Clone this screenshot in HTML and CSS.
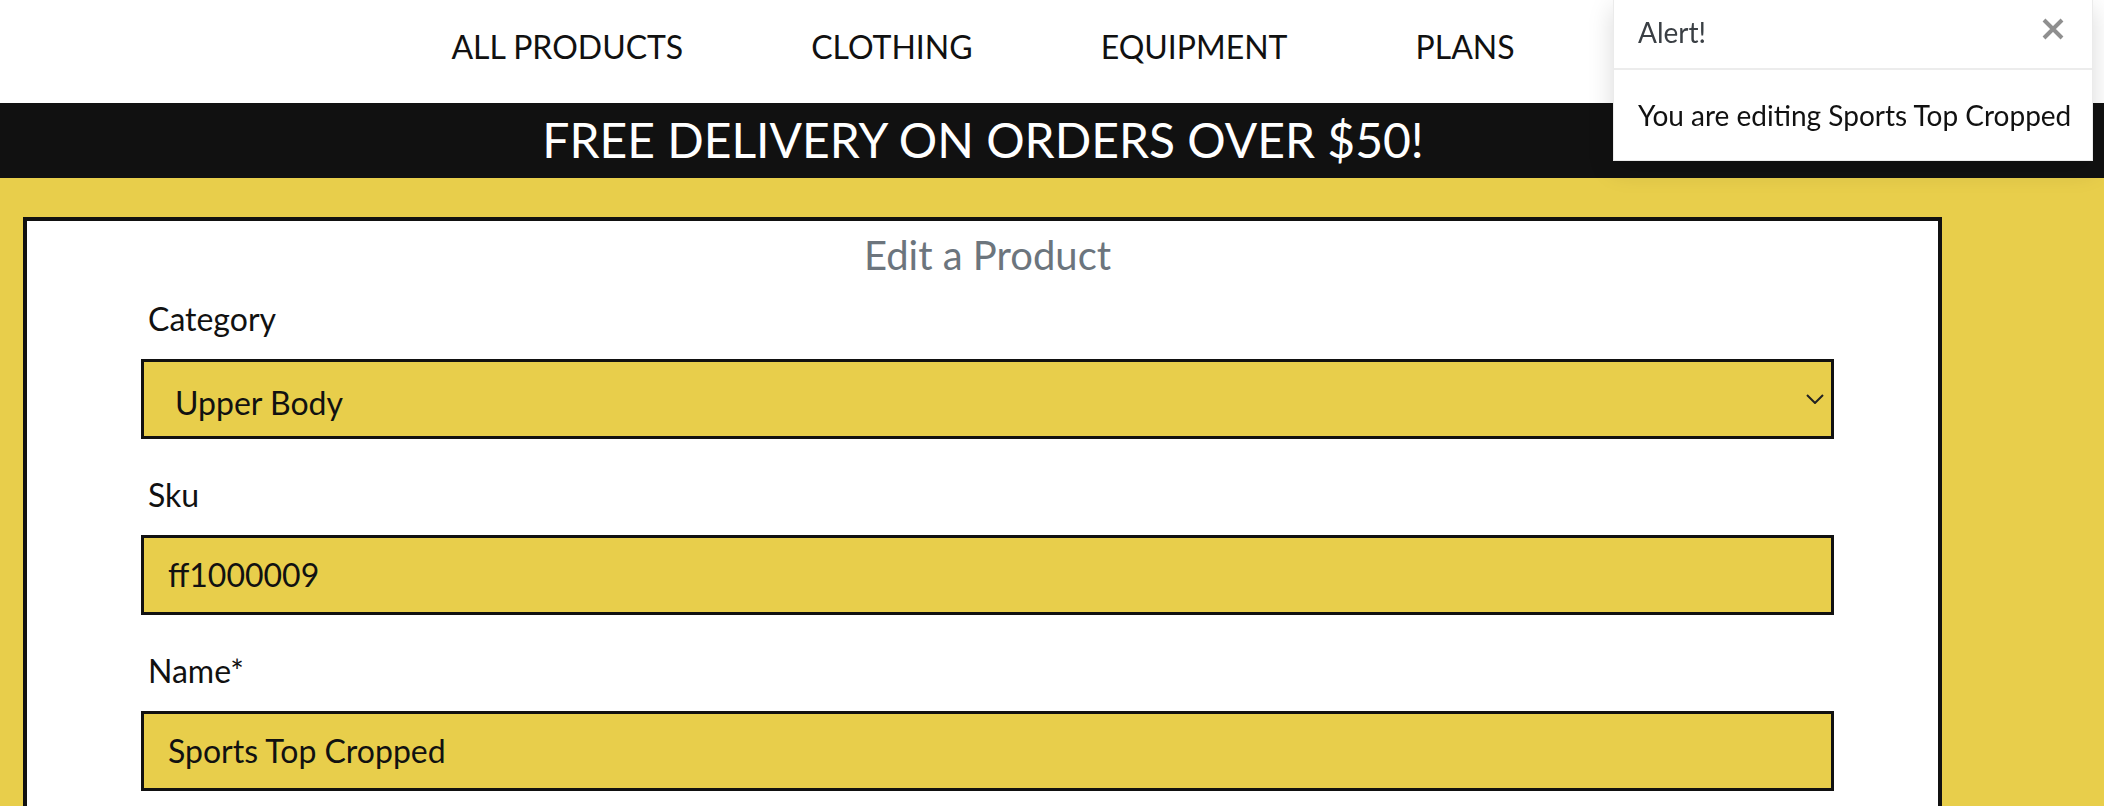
FILE: index.html
```html
<!DOCTYPE html>
<html lang="en">
<head>
<meta charset="utf-8">
<title>Edit a Product</title>
<link rel="stylesheet" href="styles.css">
</head>
<body>
<header class="topnav">
  <nav class="nav-links">
    <a class="nav-link" href="#">ALL PRODUCTS</a>
    <a class="nav-link" href="#">CLOTHING</a>
    <a class="nav-link" href="#">EQUIPMENT</a>
    <a class="nav-link" href="#">PLANS</a>
  </nav>
</header>
<div class="banner">
  <p class="banner-text">FREE DELIVERY ON ORDERS OVER $50!</p>
</div>
<main class="page">
  <section class="card">
    <h2 class="card-title">Edit a Product</h2>
    <form class="form">
      <div class="form-group">
        <label class="form-label">Category</label>
        <div class="select-box">
          <span class="select-value">Upper Body</span>
          <svg class="chevron" width="18" height="10" viewBox="0 0 18 10"><path d="M1 1 L9 9 L17 1" fill="none" stroke="#222" stroke-width="2"/></svg>
        </div>
      </div>
      <div class="form-group">
        <label class="form-label">Sku</label>
        <div class="text-input">ff1000009</div>
      </div>
      <div class="form-group">
        <label class="form-label">Name*</label>
        <div class="text-input">Sports Top Cropped</div>
      </div>
    </form>
  </section>
</main>
<div class="toast">
  <div class="toast-header">
    <span class="toast-title">Alert!</span>
    <svg class="toast-close" width="22" height="22" viewBox="0 0 22 22"><path d="M2 2 L20 20 M20 2 L2 20" stroke="#8f8f8f" stroke-width="4" fill="none"/></svg>
  </div>
  <div class="toast-body">You are editing Sports Top Cropped</div>
</div>
</body>
</html>
```
FILE: styles.css
```css
html {
  overflow: hidden;
}
body {
  margin: 0;
  background: #e8ce4b;
  font-family: Lato, "Open Sans", sans-serif;
  color: #111;
}
.topnav {
  box-sizing: border-box;
  height: 103px;
  background: #fff;
  padding: 28px 138px 0 0;
}
.nav-links {
  display: flex;
  justify-content: center;
  gap: 128px;
}
.nav-link {
  font-size: 32px;
  line-height: 38px;
  color: #111;
  text-decoration: none;
}
.banner {
  box-sizing: border-box;
  height: 75px;
  background: #111;
  padding: 8px 138px 0 0;
}
.banner-text {
  margin: 0;
  text-align: center;
  color: #fff;
  font-size: 48px;
  line-height: 57px;
}
.page {
  padding: 39px 162px 0 23px;
}
.card {
  background: #fff;
  border: 4px solid #111;
  padding: 10px 104px 0 114px;
}
.card-title {
  margin: 0 0 16px;
  text-align: center;
  font-weight: 400;
  font-size: 40px;
  line-height: 48px;
  color: #6c757d;
}
.form-group {
  margin-bottom: 32px;
}
.form-label {
  display: block;
  padding-left: 7px;
  margin-bottom: 16px;
  font-size: 32px;
  line-height: 48px;
  color: #111;
}
.text-input {
  box-sizing: border-box;
  height: 80px;
  border: 3px solid #111;
  background: #e8ce4b;
  padding: 0 24px;
  font-size: 32px;
  line-height: 74px;
  color: #111;
}
.select-box {
  box-sizing: border-box;
  height: 80px;
  border: 3px solid #111;
  background: #e8ce4b;
  display: flex;
  align-items: center;
  padding: 0 7px 0 31px;
}
.select-value {
  flex: 1;
  font-size: 32px;
  line-height: 38px;
  margin-top: 8px;
  color: #111;
}
.chevron {
  display: block;
}
.toast {
  position: fixed;
  top: 0;
  right: 11px;
  width: 480px;
  box-sizing: border-box;
  background: #fff;
  border: 1px solid rgba(0, 0, 0, 0.08);
  border-top: 0;
  box-shadow: 0 8px 24px rgba(0, 0, 0, 0.15);
}
.toast-header {
  box-sizing: border-box;
  height: 70px;
  display: flex;
  align-items: flex-start;
  padding: 11px 28px 0 24px;
  border-bottom: 2px solid #ececec;
}
.toast-title {
  flex: 1;
  font-size: 28px;
  line-height: 42px;
  color: #3a3f44;
}
.toast-close {
  display: block;
  margin-top: 7px;
}
.toast-body {
  padding: 24px 0 24px 24px;
  font-size: 28px;
  line-height: 42px;
  white-space: nowrap;
  color: #111;
}
```
